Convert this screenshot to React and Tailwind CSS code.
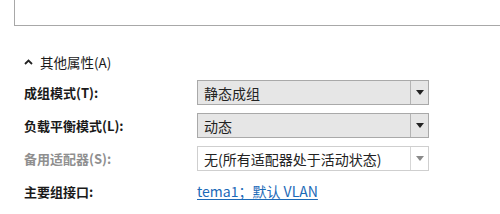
import { useState } from 'react';

// 下拉框：灰底为可编辑，禁用时为白底浅边框
function Dropdown({ value, disabled }) {
  return (
    <div
      className={
        'flex h-[25px] w-[232px] items-stretch border ' +
        (disabled ? 'border-[#cfcfcf] bg-white text-[#222]' : 'border-[#a9a9a9] bg-[#e6e6e6] text-[#222]')
      }
    >
      <div className="flex flex-1 items-center pl-[6px] text-[14px] leading-none">{value}</div>
      <div
        className={
          'flex w-[18px] items-center justify-center border-l ' +
          (disabled ? 'border-[#d6d6d6]' : 'border-[#b4b4b4]')
        }
      >
        <svg width="8" height="5" viewBox="0 0 8 5">
          <path d="M0 0 L8 0 L4 5 Z" fill={disabled ? '#8a8a8a' : '#222'} />
        </svg>
      </div>
    </div>
  );
}

function Row({ label, muted, children }) {
  return (
    <div className="flex h-[25px] items-center">
      <div
        className={
          'w-[173px] text-[13px] font-bold ' + (muted ? 'text-[#8f8f8f]' : 'text-[#1a1a1a]')
        }
      >
        {label}
      </div>
      {children}
    </div>
  );
}

export default function App() {
  const [open] = useState(true);

  return (
    <div
      className="h-[214px] w-[500px] overflow-hidden bg-white"
      style={{ fontFamily: '"Microsoft YaHei", "Noto Sans CJK SC", sans-serif' }}
    >
      <div className="ml-[14px] h-[26px] border-b border-l border-[#a8a8a8]" />

      <div className="mt-[26px] flex items-center pl-[24px] text-[13.5px] text-[#1a1a1a]">
        <svg width="9" height="6" viewBox="0 0 9 6" className="mr-[7px]">
          <path d="M1 5 L4.5 1.5 L8 5" fill="none" stroke="#222" strokeWidth="1.8" />
        </svg>
        <span>其他属性(A)</span>
      </div>

      {open && (
        <div className="mt-[8px] flex flex-col gap-[8px] pl-[24px]">
          <Row label="成组模式(T):">
            <Dropdown value="静态成组" />
          </Row>
          <Row label="负载平衡模式(L):">
            <Dropdown value="动态" />
          </Row>
          <Row label="备用适配器(S):" muted>
            <Dropdown value="无(所有适配器处于活动状态)" disabled />
          </Row>
          <Row label="主要组接口:">
            <a href="#" className="text-[14px] text-[#1c6ab8] underline underline-offset-2">
              tema1；默认 VLAN
            </a>
          </Row>
        </div>
      )}
    </div>
  );
}
